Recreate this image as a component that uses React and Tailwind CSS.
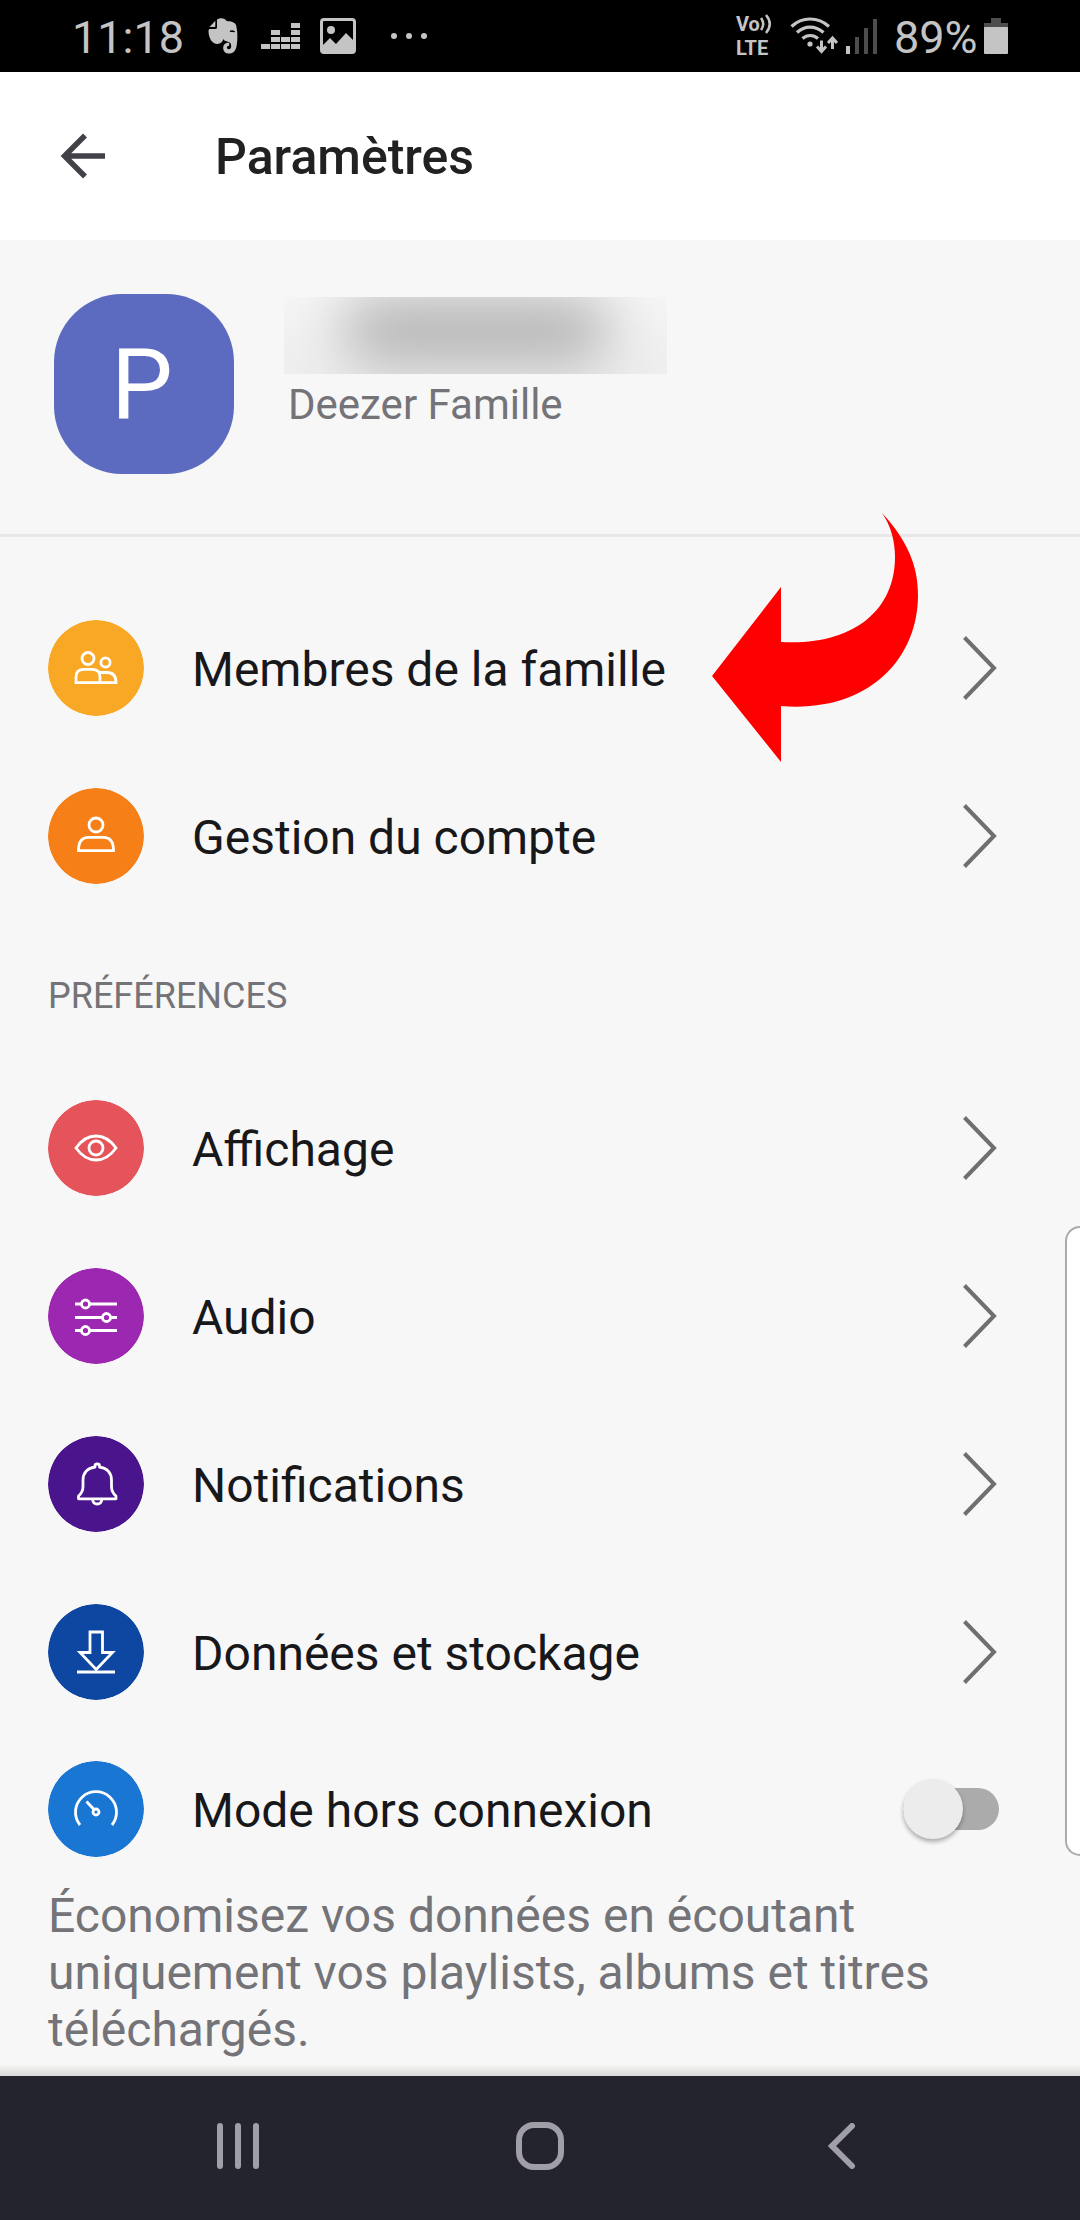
import React, { useState } from 'react';

const ICON = 'w-24 h-24 shrink-0 rounded-full';

const FamilyIcon = () => (
    <svg viewBox="0 0 96 96" className={ICON} fill="none" stroke="#fff" strokeWidth="2.8" aria-hidden="true">
        <circle cx="48" cy="48" r="48" fill="#f9a825" stroke="none" />
        <circle cx="40" cy="38.5" r="6" />
        <circle cx="57.5" cy="42.5" r="4.6" />
        <path d="M28 62.6V57c0-5 3-7.6 8-7.6h8c5 0 8 2.6 8 7.6v5.6z" />
        <path d="M51 52.5h8c6 0 9 3 9 10.100H52" />
    </svg>
);

const AccountIcon = () => (
    <svg viewBox="0 0 96 96" className={ICON} fill="none" stroke="#fff" strokeWidth="2.8" aria-hidden="true">
        <circle cx="48" cy="48" r="48" fill="#f67f17" stroke="none" />
        <circle cx="48" cy="37" r="7" />
        <path d="M30.5 62.6c0-9 3.5-13.2 10-13.2h15c6.5 0 10 4.2 10 13.2z" />
    </svg>
);

const EyeIcon = () => (
    <svg viewBox="0 0 96 96" className={ICON} fill="none" stroke="#fff" strokeWidth="2.8" aria-hidden="true">
        <circle cx="48" cy="48" r="48" fill="#e5535b" stroke="none" />
        <path d="M28 48c6-8.5 12.500-12 20-12s14 3.5 20 12c-6 8.5-12.500 12-20 12s-14-3.5-20-12z" />
        <circle cx="48" cy="48" r="7" />
    </svg>
);

const SlidersIcon = () => (
    <svg viewBox="0 0 96 96" className={ICON} fill="none" stroke="#fff" strokeWidth="2.8" aria-hidden="true">
        <circle cx="48" cy="48" r="48" fill="#9c27b0" stroke="none" />
        <path d="M27 36h6.500M41.500 36H69M27 49.500h27.500M62.500 49.500H69M27 62.500h6.500M41.500 62.500H69" />
        <circle cx="37.5" cy="36" r="4" />
        <circle cx="58.5" cy="49.5" r="4" />
        <circle cx="37.5" cy="62.5" r="4" />
    </svg>
);

const BellIcon = () => (
    <svg viewBox="0 0 96 96" className={ICON} fill="none" stroke="#fff" strokeWidth="2.8" strokeLinejoin="round" aria-hidden="true">
        <circle cx="48" cy="48" r="48" fill="#4a148c" stroke="none" />
        <path d="M47 31c-8.5 1.200-12 7-12 13v6.500c0 5-1.500 7-4.500 9.500v2.800h37.500V60c-3-2.500-4.500-4.500-4.500-9.500V44c0-6-3.500-11.800-12-13v-1.500c0-2-4.500-2-4.500 0z" />
        <path d="M44.5 63c.3 3.5 2 5 4.700 5s4.400-1.500 4.700-5" />
    </svg>
);

const DownloadIcon = () => (
    <svg viewBox="0 0 96 96" className={ICON} fill="none" stroke="#fff" strokeWidth="2.8" aria-hidden="true">
        <circle cx="48" cy="48" r="48" fill="#0d47a1" stroke="none" />
        <path d="M42 28h12.500v20.500h10L48.200 65.500 32 48.500h10z" />
        <path d="M29 68h38" />
    </svg>
);

const GaugeIcon = () => (
    <svg viewBox="0 0 96 96" className={ICON} fill="none" stroke="#fff" strokeWidth="2.8" aria-hidden="true">
        <circle cx="48" cy="48" r="48" fill="#1976d2" stroke="none" />
        <path d="M32 64a20.500 20.500 0 1 1 32 0" />
        <circle cx="48" cy="51" r="3" />
        <path d="M46 48.500l-7.500-8" />
    </svg>
);

const accountItems = [
    { label: 'Membres de la famille', Icon: FamilyIcon },
    { label: 'Gestion du compte', Icon: AccountIcon },
];

const preferenceItems = [
    { label: 'Affichage', Icon: EyeIcon },
    { label: 'Audio', Icon: SlidersIcon },
    { label: 'Notifications', Icon: BellIcon },
    { label: 'Données et stockage', Icon: DownloadIcon },
];

const StatusBar = () => (
    <div className="flex h-[72px] items-center justify-between bg-black px-[72px] text-[45px] leading-[57px] text-[#c4c4c4]">
        <div className="flex items-center">
            <span className="w-[136px] pt-[2px]">11:18</span>
            {/* Evernote */}
            <svg viewBox="0 0 30 36" className="h-9 w-[30px]" aria-hidden="true">
                <path fill="#c4c4c4" d="M9 1.500C12-.3 17-.3 18.500 3c4 .3 8.500 1 9.500 4 1.600 6 1.800 14 .6 21-.8 5-3.600 7.500-7.400 7.500-4 0-6-2.500-6-5.600 0-3.500 2.500-5.400 6-5.200v3c-1.700 0-2.300.8-2.300 1.700 0 1.200.8 1.800 2 1.800 1.700 0 2.300-1.400 2.300-3.400 0-3-1.600-4-4.200-4.400-1.600-.2-3-.7-3.600-2.300C14.600 24 12.500 26 9.500 26 4 25.500 1 21 .5 13.500c0-2 .5-2.500 2-2.500H7c1.500 0 2-.5 2-2z" />
                <path fill="#c4c4c4" d="M1.500 9L7.300 2.800V8c0 .7-.3 1-1 1z" />
                <path stroke="#000" strokeWidth="1.400" d="M22 13.500c1-.8 3.500-.8 4.500.5" />
            </svg>
            {/* Deezer */}
            <svg viewBox="0 0 39 27" className="ml-[23px] h-[27px] w-[39px]" fill="#c4c4c4" aria-hidden="true">
                <path d="M0 21h9v5H0zM10 21h9v5h-9zM20 21h9v5h-9zM30 21h9v5h-9zM10 14h9v5h-9zM20 14h9v5h-9zM30 14h9v5h-9zM10 7h9v5h-9zM30 7h9v5h-9zM30 0h9v5h-9z" />
            </svg>
            <svg viewBox="0 0 36 36" className="ml-5 h-9 w-9" aria-hidden="true">
                <rect x="1.5" y="1.5" width="33" height="33" rx="2.5" fill="none" stroke="#c4c4c4" strokeWidth="3" />
                <circle cx="11" cy="12" r="4" fill="#c4c4c4" />
                <path fill="#c4c4c4" d="M2 28l8-8 6 6 10-11 8 8v11H2z" />
            </svg>
            <svg viewBox="0 0 38 8" className="ml-[34px] h-2 w-[38px]" fill="#c4c4c4" aria-hidden="true">
                <circle cx="4" cy="4" r="3" />
                <circle cx="19" cy="4" r="3" />
                <circle cx="34" cy="4" r="3" />
            </svg>
        </div>
        <div className="flex items-center">
            <div className="mr-4 w-[38px] text-[20px] leading-[24px] font-bold">
                <div className="flex items-center">
                    Vo
                    <svg viewBox="0 0 12 20" className="h-5 w-3" fill="none" stroke="#c4c4c4" strokeWidth="2.5" aria-hidden="true">
                        <path d="M1 4c3 4 3 8 0 12M6 1c5 6 5 12 0 18" />
                    </svg>
                </div>
                <div>LTE</div>
            </div>
            <svg viewBox="0 0 48 38" className="h-[38px] w-12" fill="none" stroke="#c4c4c4" strokeWidth="3.2" aria-hidden="true">
                <path d="M1.500 9.500C12-.5 28-.5 39 9.500M7 15.500c8-7.300 18-7.300 26.500 0M12.500 21.500c4.500-4 11-4 15.500 0" />
                <circle cx="20" cy="27" r="2.6" fill="#c4c4c4" stroke="none" />
                <path strokeWidth="3" d="M31.500 23.500V34M27 29.500l4.500 5 4.500-5M42.500 32V21M38 26l4.500-5 4.500 5" />
            </svg>
            <svg viewBox="0 0 32 36" className="ml-2 h-9 w-8" aria-hidden="true">
                <rect x="0" y="28" width="4" height="8" fill="#c4c4c4" />
                <path fill="#4d4d4d" d="M9 19h4v17H9zM18 10h4v26h-4zM27 1h4v35h-4z" />
            </svg>
            <span className="ml-4 w-[90px] pt-[2px]">89%</span>
            <svg viewBox="0 0 24 36" className="h-9 w-6" aria-hidden="true">
                <path fill="#4d4d4d" d="M7 0h10v5h7v5H0V5h7z" />
                <rect y="9" width="24" height="27" rx="1" fill="#c4c4c4" />
            </svg>
        </div>
    </div>
);

const Chevron = () => (
    <svg viewBox="0 0 34 64" className="h-16 w-[34px]" fill="none" stroke="#6f6f72" strokeWidth="4" aria-hidden="true">
        <path d="M1.500 1.500L31 32 1.500 62.500" />
    </svg>
);

const SettingsRow = ({ label, Icon }) => (
    <li>
        <a href="#" className="flex h-[168px] items-center pr-[83px]">
            <Icon />
            <span className="ml-12 flex-1 pt-[2px]">{label}</span>
            <Chevron />
        </a>
    </li>
);

const App = () => {
    const [offline, setOffline] = useState(false);

    return (
        <div className="relative flex min-h-screen flex-col overflow-hidden bg-[#f7f7f7] font-[Roboto,sans-serif] text-[48px] leading-[57px] text-[#18181a]">
            <StatusBar />

            <header className="flex h-[168px] items-center bg-white pl-[60px]">
                <button type="button" aria-label="Retour">
                    <svg viewBox="0 0 46 46" className="h-[46px] w-[46px]" fill="none" stroke="#414147" strokeWidth="5.5" aria-hidden="true">
                        <path d="M25 2.500L4.500 23 25 43.500M4 23h41" />
                    </svg>
                </button>
                <h1 className="ml-[109px] pt-[2px] text-[50px] font-medium text-[#212121]">Paramètres</h1>
            </header>

            {/* Profile */}
            <section className="flex items-start border-b-[3px] border-[#e8e8e8] pt-[54px] pb-[60px] pl-[54px]">
                <div className="flex h-[180px] w-[180px] items-center justify-center rounded-[68px] bg-[#5c6bc0] pr-1 text-[98px] text-white">
                    P
                </div>
                <div className="ml-[50px] pt-[3px]">
                    <div className="h-[77px] w-[383px] overflow-hidden bg-linear-to-b from-[#f5f5f5] to-[#eeeeee]">
                        <div className="mx-auto h-[68px] w-[270px] rounded-full bg-[#b4b4b4] blur-[28px]"></div>
                    </div>
                    <p className="pt-[2px] pl-1 text-[42px] text-[#737378]">Deezer Famille</p>
                </div>
            </section>

            <main className="flex-1 pl-12">
                <ul className="pt-[47px]">
                    {accountItems.map((item) => (
                        <SettingsRow key={item.label} {...item} />
                    ))}
                </ul>

                <h2 className="pt-12 text-[36px] text-[#737378]">PRÉFÉRENCES</h2>
                <ul className="pt-[39px]">
                    {preferenceItems.map((item) => (
                        <SettingsRow key={item.label} {...item} />
                    ))}
                </ul>

                <label className="flex items-center pt-[25px] pr-[81px]">
                    <GaugeIcon />
                    <span className="ml-12 flex-1 pt-[2px]">Mode hors connexion</span>
                    <input
                        type="checkbox"
                        role="switch"
                        checked={offline}
                        onChange={(e) => setOffline(e.target.checked)}
                        className="peer sr-only"
                    />
                    <span className="flex h-[42px] w-24 items-center rounded-full bg-[#ababab] peer-checked:justify-end peer-checked:bg-[#1976d2]">
                        <span className="h-[60px] w-[60px] shrink-0 rounded-full bg-[#ececec] shadow-[0_3px_4px_rgba(0,0,0,0.3)]"></span>
                    </span>
                </label>
                <p className="max-w-[920px] pt-[30px] text-[#737378]">
                    Économisez vos données en écoutant uniquement vos playlists, albums et titres téléchargés.
                </p>
            </main>

            <div className="h-3 bg-linear-to-b from-[#f7f7f7] to-[#d8d8d6]"></div>
            <nav className="grid h-36 grid-cols-3 items-center bg-[#24242f] px-[87px] pb-1">
                <button type="button" aria-label="Applications récentes" className="mx-auto">
                    <svg viewBox="0 0 44 46" className="h-[46px] w-11" stroke="#a09fa8" strokeWidth="6" strokeLinecap="round" aria-hidden="true">
                        <path d="M4 3v40M22 3v40M40 3v40" />
                    </svg>
                </button>
                <button type="button" aria-label="Accueil" className="mx-auto h-12 w-12 rounded-[18px] border-6 border-[#a09fa8]"></button>
                <button type="button" aria-label="Retour" className="mx-auto">
                    <svg viewBox="0 0 28 46" className="h-[46px] w-7" fill="none" stroke="#a09fa8" strokeWidth="6" strokeLinecap="round" aria-hidden="true">
                        <path d="M24 3L4 23l20 20" />
                    </svg>
                </button>
            </nav>

            {/* Edge panel handle */}
            <div className="absolute top-[1226px] right-0 h-[630px] w-[15px] rounded-l-[15px] border-2 border-r-0 border-[#ababab] bg-white"></div>

            {/* Pointer to the family members row */}
            <svg viewBox="0 0 208 250" className="absolute top-[513px] right-[160px] h-[250px] w-[208px]" fill="#ff0000" aria-hidden="true">
                <path d="M170 0C195 27 206 52 206 82c0 66-52 118-137 111v56L0 163 69 74v55c70 4 114-30 114-85 0-16-4-31-13-44z" />
            </svg>
        </div>
    );
};

export default App;
